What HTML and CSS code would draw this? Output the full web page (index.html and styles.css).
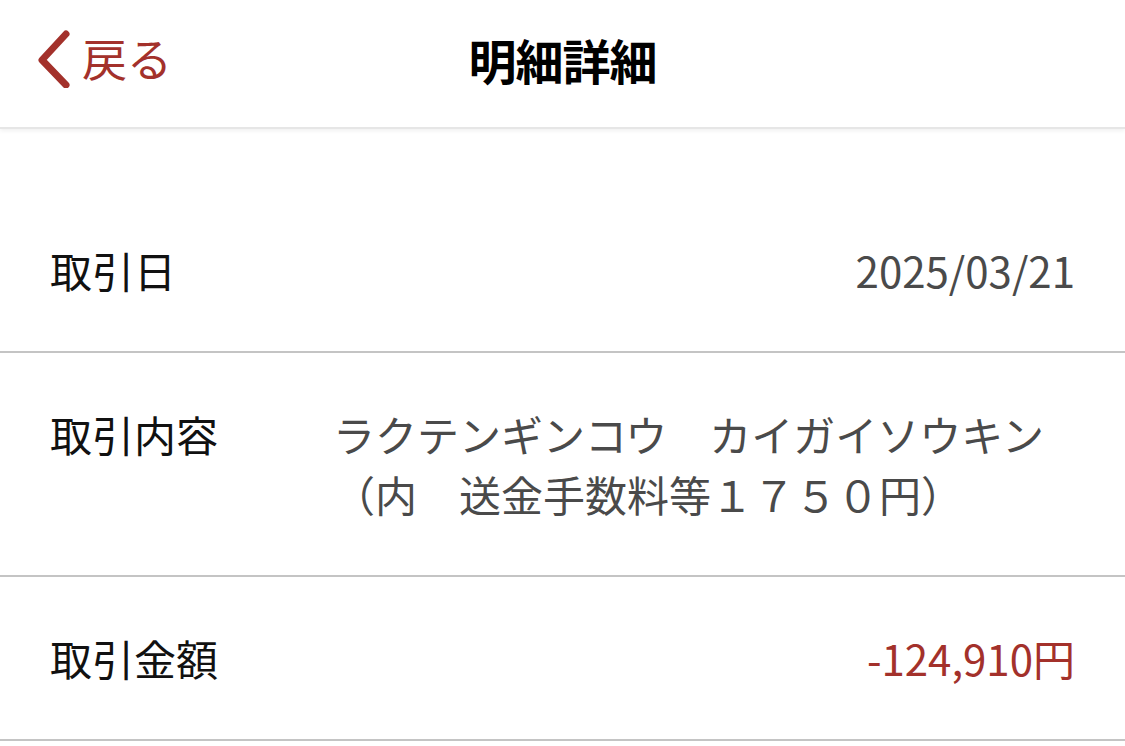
FILE: index.html
```html
<!DOCTYPE html>
<html lang="ja">
<head>
    <meta charset="UTF-8">
    <meta name="viewport" content="width=device-width, initial-scale=1.0">
    <title>明細詳細</title>
    <link rel="stylesheet" href="styles.css">
</head>
<body>
    <header class="topbar">
        <a class="back" href="#">
            <svg class="back-icon" width="40" height="60" viewBox="0 0 40 60">
                <path d="M32 6 L8 32 L32 57" fill="none" stroke="#a3312b" stroke-width="7" stroke-linecap="round" stroke-linejoin="round"/>
            </svg>
            <span>戻る</span>
        </a>
        <h1 class="title">明細詳細</h1>
    </header>

    <main class="detail">
        <div class="row">
            <div class="label">取引日</div>
            <div class="value">2025/03/21</div>
        </div>
        <div class="row">
            <div class="label">取引内容</div>
            <div class="value value-text">ラクテンギンコウ　カイガイソウキン<br>（内　送金手数料等１７５０円）</div>
        </div>
        <div class="row">
            <div class="label">取引金額</div>
            <div class="value amount">-124,910円</div>
        </div>
    </main>
</body>
</html>
```

FILE: styles.css
```css
body {
    margin: 0;
    background-color: #ffffff;
    font-family: "Noto Sans CJK JP", "Noto Sans", sans-serif;
    color: #111111;
}

.topbar {
    position: relative;
    height: 129px;
    display: flex;
    align-items: center;
    justify-content: center;
    box-sizing: border-box;
    padding-bottom: 10px;
    border-bottom: 2px solid #e6e6e6;
    box-shadow: 0 2px 4px rgba(0, 0, 0, 0.06);
}

.back {
    position: absolute;
    left: 34px;
    top: 28px;
    display: flex;
    align-items: center;
    gap: 8px;
    color: #a3312b;
    text-decoration: none;
    font-size: 45px;
    line-height: 60px;
}

.title {
    margin: 0;
    font-size: 48px;
    font-weight: bold;
    color: #000000;
    letter-spacing: -1px;
}

.detail {
    padding-top: 60px;
}

.row {
    display: grid;
    grid-template-columns: 283px 1fr;
    padding: 51px 50px 51px 50px;
    border-bottom: 2px solid #c4c4c4;
    font-size: 42px;
    line-height: 60px;
}

.label {
    color: #111111;
}

.value {
    text-align: right;
    color: #4a4a4a;
}

.value-text {
    text-align: left;
}

.amount {
    color: #a3312b;
}
```
